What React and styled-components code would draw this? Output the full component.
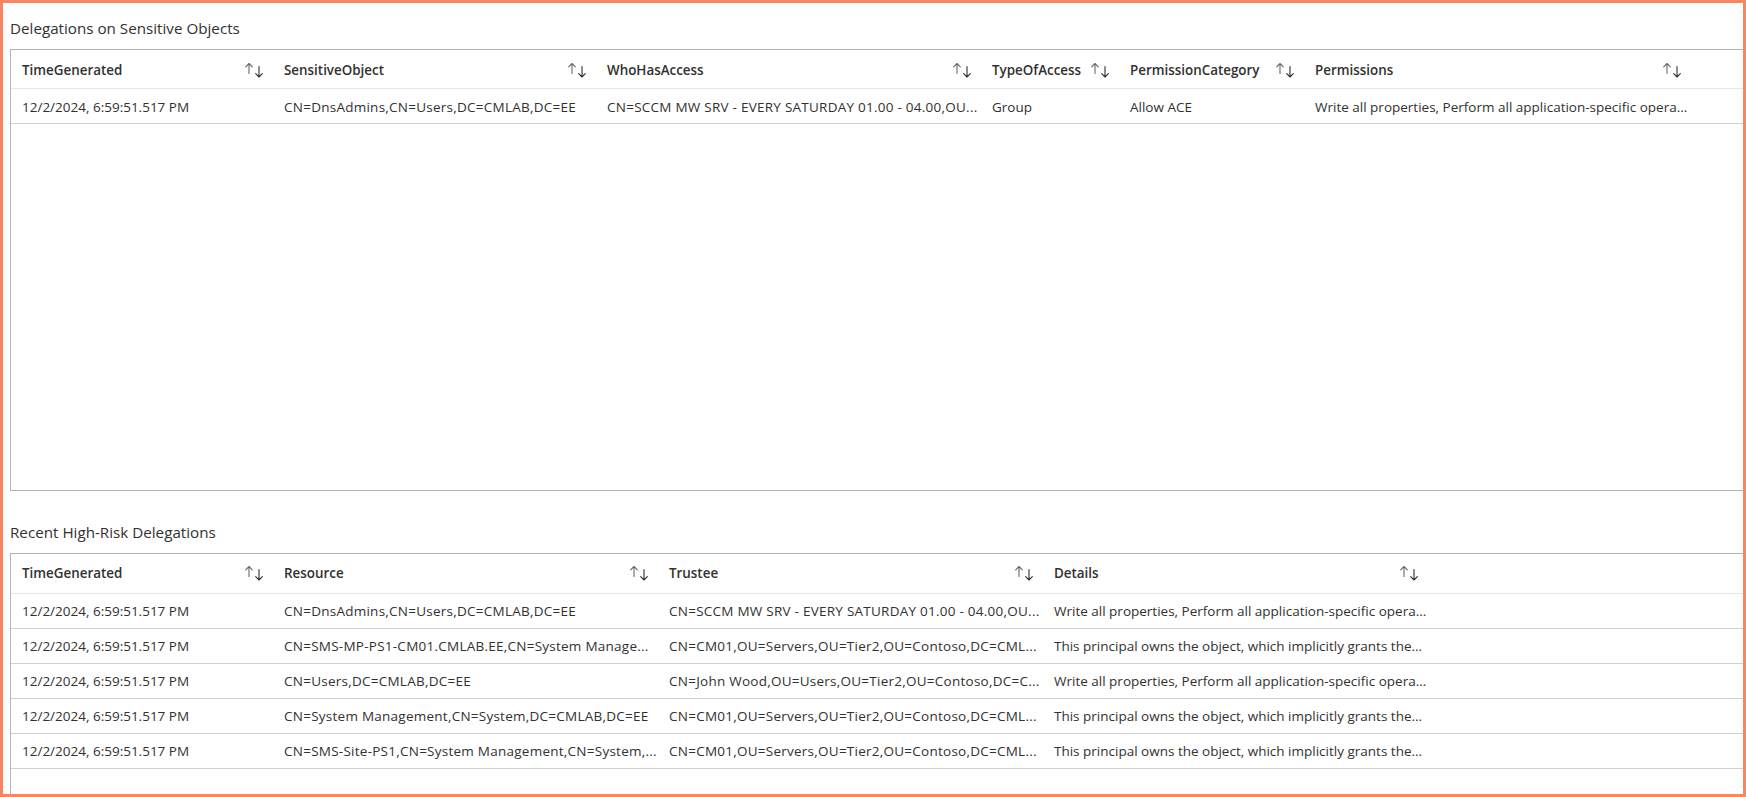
import React from "react";
import styled, { createGlobalStyle } from "styled-components";

const Global = createGlobalStyle`
  html, body { margin: 0; padding: 0; background: #fff; }
  * { box-sizing: border-box; }
`;

const Frame = styled.div`
  width: 1746px;
  height: 797px;
  border: 3px solid #f98660;
  background: #fff;
  overflow: hidden;
  padding-left: 7px;
  font-family: "Open Sans", "Noto Sans", sans-serif;
  color: #323130;
`;

const Section = styled.section`
  display: flex;
  flex-direction: column;
  gap: 9px;
  margin-top: ${(p) => p.$top}px;
`;

const Title = styled.h2`
  margin: 0;
  height: 24px;
  line-height: 24px;
  font-size: 15.2px;
  font-weight: 500;
  color: #323130;
  white-space: nowrap;
`;

const Table = styled.div`
  width: 1760px;
  height: ${(p) => p.$height}px;
  border: 1px solid #b4b4b4;
  flex: none;
`;

const Row = styled.div`
  display: grid;
  grid-template-columns: ${(p) => p.$cols};
  height: ${(p) => p.$height}px;
  padding-top: ${(p) => p.$pt || 0}px;
  padding-bottom: ${(p) => p.$pb || 0}px;
  align-items: center;
  border-bottom: 1px solid ${(p) => (p.$head ? "#e6e6e6" : "#cfcfcf")};
`;

const HeadCell = styled.div`
  display: flex;
  align-items: center;
  justify-content: space-between;
  padding-left: 11px;
  padding-right: ${(p) => p.$pr}px;
  font-size: 13.4px;
  font-weight: 600;
  white-space: nowrap;
  overflow: hidden;
`;

const Cell = styled.div`
  padding-left: 11px;
  font-size: 13.5px;
  letter-spacing: ${(p) => (p.$dn ? "0.25px" : "0")};
  white-space: nowrap;
  overflow: hidden;
`;

const SortSvg = styled.svg`
  flex: none;
  width: 18px;
  height: 16px;
`;

const SortIcon = () => (
  <SortSvg viewBox="0 0 18 16" fill="none" strokeWidth="1.1" strokeLinecap="round" strokeLinejoin="round">
    <path d="M4 11.5V1.5M0.7 4.8L4 1.5l3.3 3.3" stroke="#6a6866" />
    <path d="M14 4.5v10.5M10.7 11.7L14 15l3.3-3.3" stroke="#323130" />
  </SortSvg>
);

const time = "12/2/2024, 6:59:51.517 PM";

const top = {
  cols: "262px 323px 385px 138px 185px 467px",
  pr: [10, 10, 10, 10, 10, 90],
  head: ["TimeGenerated", "SensitiveObject", "WhoHasAccess", "TypeOfAccess", "PermissionCategory", "Permissions"],
  rows: [[
    time,
    "CN=DnsAdmins,CN=Users,DC=CMLAB,DC=EE",
    "CN=SCCM MW SRV - EVERY SATURDAY 01.00 - 04.00,OU...",
    "Group",
    "Allow ACE",
    "Write all properties, Perform all application-specific opera...",
  ]],
};

const bottom = {
  cols: "262px 385px 385px 385px",
  pr: [10, 10, 10, 10],
  head: ["TimeGenerated", "Resource", "Trustee", "Details"],
  rows: [
    [time, "CN=DnsAdmins,CN=Users,DC=CMLAB,DC=EE", "CN=SCCM MW SRV - EVERY SATURDAY 01.00 - 04.00,OU...", "Write all properties, Perform all application-specific opera..."],
    [time, "CN=SMS-MP-PS1-CM01.CMLAB.EE,CN=System Manage...", "CN=CM01,OU=Servers,OU=Tier2,OU=Contoso,DC=CML...", "This principal owns the object, which implicitly grants the..."],
    [time, "CN=Users,DC=CMLAB,DC=EE", "CN=John Wood,OU=Users,OU=Tier2,OU=Contoso,DC=C...", "Write all properties, Perform all application-specific opera..."],
    [time, "CN=System Management,CN=System,DC=CMLAB,DC=EE", "CN=CM01,OU=Servers,OU=Tier2,OU=Contoso,DC=CML...", "This principal owns the object, which implicitly grants the..."],
    [time, "CN=SMS-Site-PS1,CN=System Management,CN=System,...", "CN=CM01,OU=Servers,OU=Tier2,OU=Contoso,DC=CML...", "This principal owns the object, which implicitly grants the..."],
  ],
};

const DataTable = ({ data, height, headHeight, headPt, headPb, rowPt }) => (
  <Table $height={height}>
    <Row $head $height={headHeight} $pt={headPt} $pb={headPb} $cols={data.cols}>
      {data.head.map((h, i) => (
        <HeadCell key={h} $pr={data.pr[i]}>
          <span>{h}</span>
          <SortIcon />
        </HeadCell>
      ))}
    </Row>
    {data.rows.map((r, i) => (
      <Row key={i} $height={35} $pt={rowPt} $cols={data.cols}>
        {r.map((c, j) => (
          <Cell key={j} $dn={c.startsWith("CN=")}>{c}</Cell>
        ))}
      </Row>
    ))}
  </Table>
);

export default function App() {
  return (
    <>
      <Global />
      <Frame>
        <Section $top={13}>
          <Title>Delegations on Sensitive Objects</Title>
          <DataTable data={top} height={442} headHeight={39} headPt={2} rowPt={2} />
        </Section>
        <Section $top={29}>
          <Title>Recent High-Risk Delegations</Title>
          <DataTable data={bottom} height={260} headHeight={40} headPb={2} />
        </Section>
      </Frame>
    </>
  );
}
